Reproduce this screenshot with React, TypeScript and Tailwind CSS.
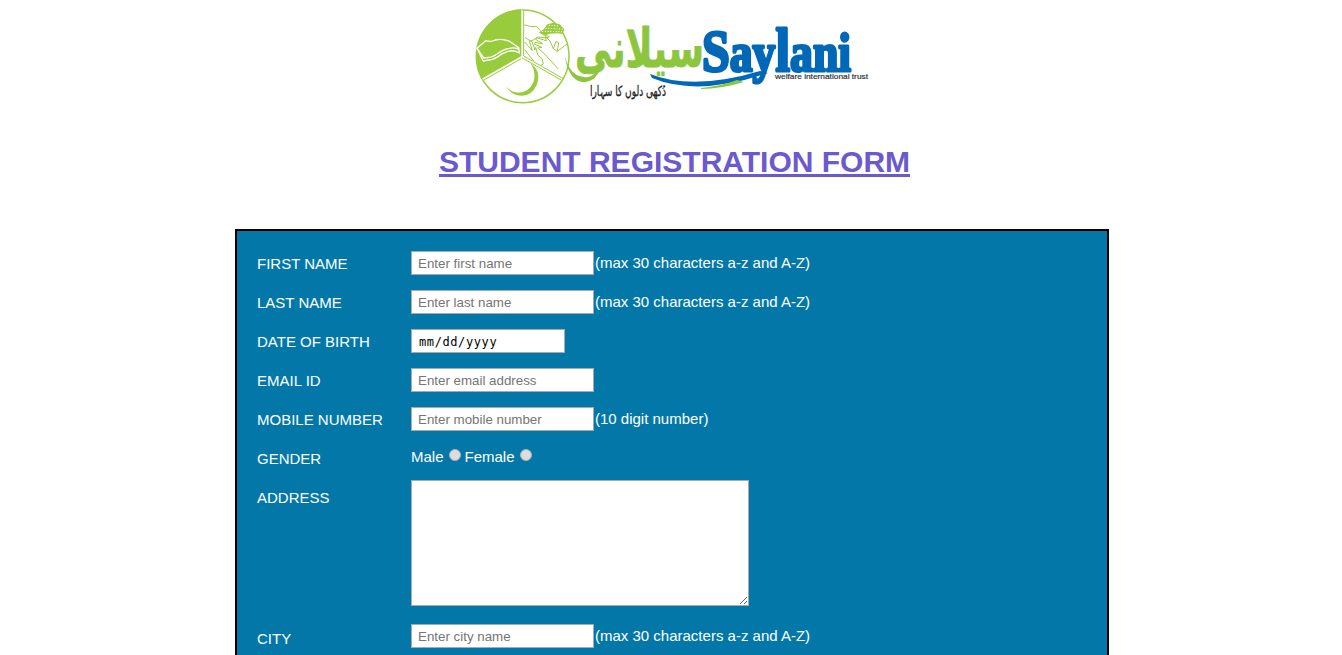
import type { ReactNode } from "react";

function Logo() {
  return (
    <svg
      width="405"
      height="110"
      viewBox="0 0 405 110"
      className="ml-0.5 block shrink-0"
      role="img"
      aria-label="Saylani Welfare International Trust"
    >
      {/* Emblem */}
      <g transform="scale(0.33333)" fill="none" stroke="#99cc3c" strokeLinejoin="round" strokeLinecap="round">
        <path d="M155 169 V28 A140 141 0 0 0 36 238 Z" fill="#99cc3c" stroke="none" />
        <circle cx="158" cy="169" r="139" strokeWidth="4.5" />
        <path d="M161 30 V168 L278 235 M152 177 L42 240 M157 174 L273 240" strokeWidth="3" />
        <path d="M156 30 V169 L38 236" stroke="#fff" strokeWidth="3" />
        {/* Book */}
        <g stroke="#fff" strokeWidth="4">
          <path d="M21 145 L47 122 Q64 127 76 120 Q94 115 117 123 L146 143 L148 159 Q125 146 105 158 Q93 161 84 170 Q67 181 48 181 L40 184 Z" />
          <path d="M21 145 L41 174 Q65 174 80 163 Q99 148 117 145 Q132 142 146 147" />
        </g>
        {/* Crescent */}
        <path
          d="M181 190 Q216 213 200 255 Q181 297 137 284 Q119 278 108 260 Q124 277 144 278 Q177 278 190 247 Q200 216 181 190 Z"
          fill="#99cc3c"
          stroke="none"
        />
        {/* Hands */}
        <g strokeWidth="3">
          <path d="M164 75 Q182 82 200 80 L213 94 L219 104 L238 110 L229 114 L205 111 L191 119 L183 124 L166 113" />
          <path d="M291 132 L262 154 L250 146 L240 123 L226 109 L229 122 L199 113 L197 118 L218 131 L195 127 L194 133 L216 142 L203 144 L224 162 L232 171 L264 206" />
          <path d="M165 127 L187 152 L178 123 L185 122 L195 150 L197 142 L204 166 L216 176 L220 192 L212 196 M165 150 L190 182" />
          <path d="M250 146 L258 124 L266 128 L262 154" />
        </g>
        {/* Grain heap */}
        <path d="M206 98 L221 88 L232 73 L250 68 L269 73 L283 88 L278 102 L262 100 L240 101 L226 106 Z" fill="#99cc3c" stroke="none" />
        <g stroke="#fff" strokeWidth="3.6" strokeDasharray="0.1 8">
          <path d="M238 76 L270 78" />
          <path d="M228 85 L278 87" />
          <path d="M218 94 L278 95" />
        </g>
      </g>

      {/* Urdu wordmark */}
      <path d="M95 56 C97 73 105 83 115 82 C125 81 130 73 130 64 C126 75 120 78 114 77 C104 76 98 69 95 56 Z" fill="#8cc63f" />
      <text
        x="234"
        y="67"
        direction="rtl"
        fontFamily="'DejaVu Sans', sans-serif"
        fontSize="54"
        fontWeight="700"
        fill="#8cc63f"
        stroke="#8cc63f"
        strokeWidth="0.8"
        textLength="129"
        lengthAdjust="spacingAndGlyphs"
      >
        سیلانی
      </text>
      <text
        x="196"
        y="96"
        direction="rtl"
        fontFamily="'DejaVu Sans', sans-serif"
        fontSize="14"
        fill="#222"
        stroke="#222"
        strokeWidth="0.3"
        textLength="76"
        lengthAdjust="spacingAndGlyphs"
      >
        دُکھی دلوں کا سہارا
      </text>

      {/* Swoosh */}
      <path d="M180 74 Q223 91 290 71 L298 73 Q228 97 182 78 Z" fill="#0068b7" />
      <path d="M231 88 Q251 86 267 80 L274 82 Q251 89 231 89 Z" fill="#8cc63f" />

      {/* Latin wordmark */}
      <text
        x="232"
        y="70.5"
        fontFamily="'Liberation Serif', serif"
        fontWeight="700"
        fontSize="54"
        fill="#0068b7"
        stroke="#0068b7"
        strokeWidth="3"
        strokeLinejoin="round"
        textLength="149"
        lengthAdjust="spacingAndGlyphs"
      >
        <tspan fontSize="59">S</tspan>ay<tspan fontSize="62">l</tspan>ani
      </text>
      <text
        x="305"
        y="78.5"
        fontFamily="'Liberation Sans', sans-serif"
        fontSize="8"
        fill="#333"
        stroke="#333"
        strokeWidth="0.2"
        textLength="93"
        lengthAdjust="spacingAndGlyphs"
      >
        welfare international trust
      </text>
    </svg>
  );
}

const fieldClass =
  "block h-6 w-[183px] shrink-0 rounded-none border border-[#a9a9a9] bg-white px-1.5 py-0 text-[13.333px] text-black outline-none placeholder:text-[#757575]";

type RowProps = { label: string; htmlFor?: string; hint?: string; labelClass?: string; className?: string; children: ReactNode };

function Row({ label, htmlFor, hint, labelClass = "pt-[3px]", className = "mb-[15px] h-6", children }: RowProps) {
  return (
    <div className={`flex items-start ${className}`}>
      <label htmlFor={htmlFor} className={`w-[154px] shrink-0 leading-5 ${labelClass}`}>
        {label}
      </label>
      {children}
      {hint && <span className="pt-0.5 pl-px leading-5">{hint}</span>}
    </div>
  );
}

function Radio({ name, label }: { name: string; label: string }) {
  return (
    <input
      type="radio"
      name={name}
      aria-label={label}
      className="mt-0.5 h-3 w-3 appearance-none rounded-full border border-[#b0b0b0] bg-[#dddddd]"
    />
  );
}

export default function App() {
  return (
    <main className="flex h-[655px] flex-col items-center overflow-hidden bg-white font-['Liberation_Sans',Arial,sans-serif] text-[15px] text-white">
      <header className="flex flex-col items-center">
        <Logo />
        <h1 className="mt-[34px] ml-[7px] text-[30px] leading-9 font-bold whitespace-nowrap text-[#6a5acd] underline">
          STUDENT REGISTRATION FORM
        </h1>
      </header>
      <form className="mt-[49px] ml-0.5 h-[1000px] w-[874px] shrink-0 border-2 border-black bg-[#0378a8] px-5 pt-5">
        <Row label="FIRST NAME" htmlFor="first" hint="(max 30 characters a-z and A-Z)">
          <input id="first" placeholder="Enter first name" className={fieldClass} />
        </Row>
        <Row label="LAST NAME" htmlFor="last" hint="(max 30 characters a-z and A-Z)">
          <input id="last" placeholder="Enter last name" className={fieldClass} />
        </Row>
        <Row label="DATE OF BIRTH" htmlFor="dob">
          <input
            id="dob"
            defaultValue="mm/dd/yyyy"
            className="block h-6 w-[154px] rounded-none border border-[#a9a9a9] bg-white px-[7px] pt-0.5 pb-0 font-['DejaVu_Sans_Mono',monospace] text-[12px] tracking-[0.6px] text-black outline-none"
          />
        </Row>
        <Row label="EMAIL ID" htmlFor="email">
          <input id="email" placeholder="Enter email address" className={fieldClass} />
        </Row>
        <Row label="MOBILE NUMBER" htmlFor="mobile" hint="(10 digit number)">
          <input id="mobile" placeholder="Enter mobile number" className={fieldClass} />
        </Row>
        <Row label="GENDER" className="mb-2.5 h-6">
          <div className="flex pt-px leading-5">
            <span className="mr-[5px]">Male</span>
            <Radio name="gender" label="Male" />
            <span className="mr-[5px] ml-1">Female</span>
            <Radio name="gender" label="Female" />
          </div>
        </Row>
        <Row label="ADDRESS" htmlFor="address" labelClass="pt-2" className="mb-[18px] h-[126px]">
          <textarea
            id="address"
            className="block h-[126px] w-[338px] resize rounded-none border border-[#a9a9a9] bg-white p-1.5 text-[13.333px] text-black outline-none"
          />
        </Row>
        <Row label="CITY" htmlFor="city" hint="(max 30 characters a-z and A-Z)" labelClass="pt-[5px]">
          <input id="city" placeholder="Enter city name" className={fieldClass} />
        </Row>
      </form>
    </main>
  );
}
